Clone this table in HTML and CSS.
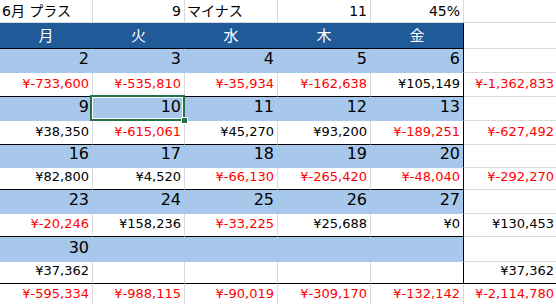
FILE: index.html
```html
<!DOCTYPE html>
<html lang="ja">
<head>
<meta charset="utf-8">
<title>6月</title>
<link rel="stylesheet" href="styles.css">
</head>
<body>
<div class="sheet">
  <div class="c t l">6月 プラス</div>
  <div class="c t">9</div>
  <div class="c t l">マイナス</div>
  <div class="c t">11</div>
  <div class="c t">45%</div>
  <div class="c t"></div>

  <div class="c h">月</div>
  <div class="c h">火</div>
  <div class="c h">水</div>
  <div class="c h">木</div>
  <div class="c h e">金</div>
  <div class="c"></div>

  <div class="c d">2</div>
  <div class="c d">3</div>
  <div class="c d">4</div>
  <div class="c d">5</div>
  <div class="c d e">6</div>
  <div class="c"></div>
  <div class="c a n">¥-733,600</div>
  <div class="c a n">¥-535,810</div>
  <div class="c a n">¥-35,934</div>
  <div class="c a n">¥-162,638</div>
  <div class="c a e">¥105,149</div>
  <div class="c n">¥-1,362,833</div>

  <div class="c d">9</div>
  <div class="c d sel">10</div>
  <div class="c d">11</div>
  <div class="c d">12</div>
  <div class="c d e">13</div>
  <div class="c"></div>
  <div class="c a">¥38,350</div>
  <div class="c a n">¥-615,061</div>
  <div class="c a">¥45,270</div>
  <div class="c a">¥93,200</div>
  <div class="c a e n">¥-189,251</div>
  <div class="c n">¥-627,492</div>

  <div class="c d">16</div>
  <div class="c d">17</div>
  <div class="c d">18</div>
  <div class="c d">19</div>
  <div class="c d e">20</div>
  <div class="c"></div>
  <div class="c a">¥82,800</div>
  <div class="c a">¥4,520</div>
  <div class="c a n">¥-66,130</div>
  <div class="c a n">¥-265,420</div>
  <div class="c a e n">¥-48,040</div>
  <div class="c n">¥-292,270</div>

  <div class="c d">23</div>
  <div class="c d">24</div>
  <div class="c d">25</div>
  <div class="c d">26</div>
  <div class="c d e">27</div>
  <div class="c"></div>
  <div class="c a n">¥-20,246</div>
  <div class="c a">¥158,236</div>
  <div class="c a n">¥-33,225</div>
  <div class="c a">¥25,688</div>
  <div class="c a e">¥0</div>
  <div class="c">¥130,453</div>

  <div class="c d">30</div>
  <div class="c d"></div>
  <div class="c d"></div>
  <div class="c d"></div>
  <div class="c d e"></div>
  <div class="c"></div>
  <div class="c a">¥37,362</div>
  <div class="c a"></div>
  <div class="c a"></div>
  <div class="c a"></div>
  <div class="c a e"></div>
  <div class="c a">¥37,362</div>

  <div class="c s n">¥-595,334</div>
  <div class="c s n">¥-988,115</div>
  <div class="c s n">¥-90,019</div>
  <div class="c s n">¥-309,170</div>
  <div class="c s n">¥-132,142</div>
  <div class="c s n">¥-2,114,780</div>
</div>
</body>
</html>
```

FILE: styles.css
```css
* {
  box-sizing: border-box;
  margin: 0;
  padding: 0;
}

html, body {
  width: 556px;
  height: 304px;
  overflow: hidden;
  background: #ffffff;
}

body {
  font-family: "DejaVu Sans", "Noto Sans CJK JP", sans-serif;
  color: #000000;
}

.sheet {
  display: grid;
  grid-template-columns: 93px 92px 93px 93px 93px 94px;
  grid-template-rows: 23px 26px 24px 24px 24px 24px 23px 22px 24px 23px 25px 22px 23px;
  width: 558px;
}

.c {
  display: flex;
  align-items: flex-end;
  justify-content: flex-end;
  border-right: 1px solid #dadada;
  border-bottom: 1px solid #dadada;
  padding: 0 3px 6px 2px;
  font-size: 13px;
  line-height: 1;
  white-space: nowrap;
}

.t {
  font-size: 14px;
  padding-bottom: 4px;
}

.l {
  justify-content: flex-start;
}

.h {
  align-items: center;
  justify-content: center;
  padding: 0 0 2px;
  background: #215a98;
  border-right-color: #215a98;
  border-bottom-color: #000000;
  color: #ffffff;
  font-family: "Noto Sans CJK JP", sans-serif;
  font-size: 15px;
}

.d {
  background: #a7c8eb;
  border-right-color: #a7c8eb;
  border-bottom-color: #a7c8eb;
  font-size: 16px;
  padding-bottom: 5px;
}

.a {
  border-bottom-color: #000000;
}

.e {
  border-right-color: #000000;
}

.n {
  color: #ff0000;
}

.sel {
  position: relative;
  z-index: 1;
}

.sel::before {
  content: "";
  position: absolute;
  left: -3px;
  right: -1px;
  top: -2px;
  bottom: -1px;
  border: 2px solid #217346;
  box-shadow: inset 0 0 0 1px #ffffff;
}

.sel::after {
  content: "";
  position: absolute;
  right: -3px;
  bottom: -3px;
  width: 5px;
  height: 5px;
  background: #217346;
  box-shadow: 0 0 0 1px #ffffff;
}
```
